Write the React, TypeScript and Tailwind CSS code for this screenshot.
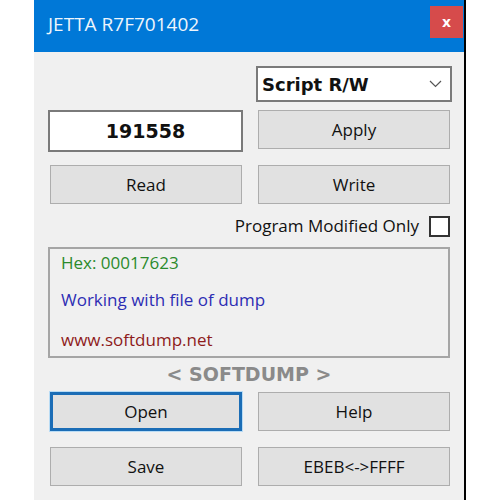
import { useState } from 'react'

const ui = { fontFamily: '"Open Sans", "Noto Sans", sans-serif' }
const bold = { fontFamily: '"DejaVu Sans", Verdana, sans-serif' }

function Btn({ label, focused }: { label: string; focused?: boolean }) {
  return (
    <button
      type="button"
      className={
        'h-[39px] w-full bg-[#e1e1e1] text-[17px] text-[#111] flex items-center justify-center ' +
        (focused
          ? 'border-[3px] border-[#1b6db6] shadow-[0_0_0_1px_#b9dcf5]'
          : 'border border-[#adadad]')
      }
      style={ui}
    >
      {label}
    </button>
  )
}

export default function App() {
  const [value, setValue] = useState('191558')
  const [modifiedOnly, setModifiedOnly] = useState(false)

  return (
    <div className="w-[500px] h-[500px] bg-white overflow-hidden">
      <div className="ml-[34px] w-[432px] h-[500px] flex flex-col bg-[#f0f0f0] border-r-2 border-black">
        {/* title bar */}
        <div className="h-[52px] shrink-0 bg-[#0078d7] flex items-center justify-between pl-[14px] pr-[1px]">
          <span className="text-[19px] text-[#eef5fc] -mt-[3px]" style={ui}>
            JETTA R7F701402
          </span>
          <div className="w-[33px] h-[32px] bg-[#d64b4b] flex items-center justify-center text-white text-[14px] font-bold -mt-[8px]" style={bold}>
            x
          </div>
        </div>

        <div className="flex flex-col pl-[14px] pr-[14px]">
          {/* script selector */}
          <div className="flex justify-end mt-[14px]">
            <div className="w-[196px] h-[36px] bg-white border-2 border-[#7a7a7a] flex items-center justify-between pl-[4px] pr-[8px] -mr-[2px]">
              <span className="text-[18px] font-bold text-[#111]" style={bold}>
                Script R/W
              </span>
              <svg width="13" height="8" viewBox="0 0 13 8" fill="none" stroke="#555" strokeWidth="1.2">
                <path d="M1 1l5.5 5.5L12 1" />
              </svg>
            </div>
          </div>

          {/* value + apply */}
          <div className="grid grid-cols-[195px_192px] justify-between mt-[8px]">
            <input
              value={value}
              onChange={(e) => setValue(e.target.value)}
              className="h-[42px] w-full bg-white border-2 border-[#7a7a7a] text-center text-[19px] font-bold text-[#111] outline-none"
              style={bold}
            />
            <Btn label="Apply" />
          </div>

          {/* read / write */}
          <div className="grid grid-cols-2 gap-[16px] pl-[2px] mt-[13px]">
            <Btn label="Read" />
            <Btn label="Write" />
          </div>

          {/* checkbox */}
          <label className="flex items-center justify-end gap-[10px] mt-[11px] h-[22px] cursor-pointer">
            <span className="text-[17px] text-[#111]" style={ui}>
              Program Modified Only
            </span>
            <input
              type="checkbox"
              checked={modifiedOnly}
              onChange={(e) => setModifiedOnly(e.target.checked)}
              className="appearance-none w-[21px] h-[21px] bg-white border-2 border-[#333] checked:bg-[#0078d7]"
            />
          </label>

          {/* info box */}
          <div className="mt-[10px] h-[111px] border-2 border-[#a5a5a5] flex flex-col pl-[11px] pt-[1px] text-[17px]" style={ui}>
            <div className="h-[25px] leading-[25px] text-[#2b8a2b]">Hex: 00017623</div>
            <div className="h-[38px] leading-[50px] text-[#2d2db4]">Working with file of dump</div>
            <div className="h-[40px] leading-[54px] text-[#8e1b1b]">www.softdump.net</div>
          </div>

          <div className="text-center text-[19px] font-bold text-[#8a8a8a] h-[32px] leading-[32px]" style={bold}>
            &lt; SOFTDUMP &gt;
          </div>

          {/* bottom buttons */}
          <div className="grid grid-cols-2 gap-x-[16px] gap-y-[16px] pl-[2px] mt-[2px]">
            <Btn label="Open" focused />
            <Btn label="Help" />
            <Btn label="Save" />
            <Btn label="EBEB<->FFFF" />
          </div>
        </div>
      </div>
    </div>
  )
}
